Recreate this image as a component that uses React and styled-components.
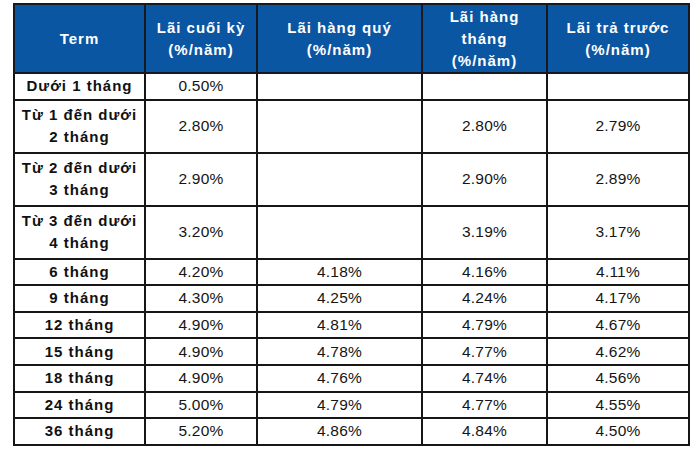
import React from "react";
import styled, { createGlobalStyle } from "styled-components";

const Global = createGlobalStyle`
  html, body { margin: 0; padding: 0; background: #ffffff; }
  body { font-family: "Liberation Sans", Arial, sans-serif; }
`;

const Page = styled.div`
  width: 700px;
  height: 451px;
  padding: 3px 0 0 13px;
  box-sizing: border-box;
  background: #fff;
`;

const Table = styled.table`
  border-collapse: collapse;
  table-layout: fixed;
  width: 675px;
  font-family: "Liberation Sans", Arial, sans-serif;
`;

const HeadCell = styled.th`
  background: #0b56a3;
  color: #ffffff;
  font-weight: bold;
  font-size: 15px;
  letter-spacing: 1px;
  line-height: 22px;
  text-align: center;
  vertical-align: middle;
  border: 2px solid #161a20;
  padding: 0 6px;
  height: 69px;
  box-sizing: border-box;
`;

const Row = styled.tr`
  height: ${(p) => (p.$tall ? "53px" : "26.6px")};
`;

const TermCell = styled.td`
  font-weight: bold;
  font-size: 15px;
  letter-spacing: 1px;
  line-height: 22px;
  color: #111;
  text-align: center;
  vertical-align: middle;
  border: 2px solid #161616;
  padding: 0 4px;
`;

const ValueCell = styled.td`
  font-size: 15.5px;
  letter-spacing: 0.2px;
  line-height: 22px;
  color: #151515;
  text-align: center;
  vertical-align: middle;
  border: 2px solid #161616;
  padding: 0 4px;
`;

const cols = [131, 112, 165, 125, 142];

const headers = [
  ["Term"],
  ["Lãi cuối kỳ", "(%/năm)"],
  ["Lãi hàng quý", "(%/năm)"],
  ["Lãi hàng", "tháng", "(%/năm)"],
  ["Lãi trả trước", "(%/năm)"],
];

const rows = [
  { term: ["Dưới 1 tháng"], v: ["0.50%", "", "", ""] },
  { term: ["Từ 1 đến dưới", "2 tháng"], v: ["2.80%", "", "2.80%", "2.79%"] },
  { term: ["Từ 2 đến dưới", "3 tháng"], v: ["2.90%", "", "2.90%", "2.89%"] },
  { term: ["Từ 3 đến dưới", "4 tháng"], v: ["3.20%", "", "3.19%", "3.17%"] },
  { term: ["6 tháng"], v: ["4.20%", "4.18%", "4.16%", "4.11%"] },
  { term: ["9 tháng"], v: ["4.30%", "4.25%", "4.24%", "4.17%"] },
  { term: ["12 tháng"], v: ["4.90%", "4.81%", "4.79%", "4.67%"] },
  { term: ["15 tháng"], v: ["4.90%", "4.78%", "4.77%", "4.62%"] },
  { term: ["18 tháng"], v: ["4.90%", "4.76%", "4.74%", "4.56%"] },
  { term: ["24 tháng"], v: ["5.00%", "4.79%", "4.77%", "4.55%"] },
  { term: ["36 tháng"], v: ["5.20%", "4.86%", "4.84%", "4.50%"] },
];

const Lines = ({ lines }) =>
  lines.map((l, i) => (
    <React.Fragment key={i}>
      {i > 0 && <br />}
      {l}
    </React.Fragment>
  ));

export default function App() {
  return (
    <>
      <Global />
      <Page>
        <Table>
          <colgroup>
            {cols.map((w, i) => (
              <col key={i} style={{ width: w }} />
            ))}
          </colgroup>
          <thead>
            <tr>
              {headers.map((h, i) => (
                <HeadCell key={i}>
                  <Lines lines={h} />
                </HeadCell>
              ))}
            </tr>
          </thead>
          <tbody>
            {rows.map((r, i) => (
              <Row key={i} $tall={r.term.length > 1}>
                <TermCell>
                  <Lines lines={r.term} />
                </TermCell>
                {r.v.map((v, j) => (
                  <ValueCell key={j}>{v}</ValueCell>
                ))}
              </Row>
            ))}
          </tbody>
        </Table>
      </Page>
    </>
  );
}
